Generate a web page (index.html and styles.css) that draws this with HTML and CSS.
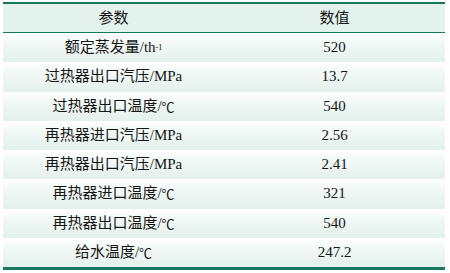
FILE: index.html
```html
<!DOCTYPE html>
<html lang="zh">
<head>
<meta charset="utf-8">
<link rel="stylesheet" href="styles.css">
</head>
<body>
<div class="tbl">
  <div class="row head"><div class="cell">参数</div><div class="cell">数值</div></div>
  <div class="body">
    <div class="row"><div class="cell">额定蒸发量/th<sup>-1</sup></div><div class="cell">520</div></div>
    <div class="row"><div class="cell">过热器出口汽压/MPa</div><div class="cell">13.7</div></div>
    <div class="row"><div class="cell">过热器出口温度/<span class="deg">℃</span></div><div class="cell">540</div></div>
    <div class="row"><div class="cell">再热器进口汽压/MPa</div><div class="cell">2.56</div></div>
    <div class="row"><div class="cell">再热器出口汽压/MPa</div><div class="cell">2.41</div></div>
    <div class="row"><div class="cell">再热器进口温度/<span class="deg">℃</span></div><div class="cell">321</div></div>
    <div class="row"><div class="cell">再热器出口温度/<span class="deg">℃</span></div><div class="cell">540</div></div>
    <div class="row"><div class="cell">给水温度/<span class="deg">℃</span></div><div class="cell">247.2</div></div>
  </div>
</div>
</body>
</html>
```
FILE: styles.css
```css
html, body {
  margin: 0;
  background: #ffffff;
}
body {
  padding: 2px 5px 0 3px;
  font-family: "Liberation Serif", "Noto Sans CJK SC", serif;
  font-size: 15px;
  color: #151515;
}
.tbl {
  width: 442px;
  border-top: 2px solid #17785c;
  border-bottom: 3px solid #17785c;
}
.row {
  display: grid;
  grid-template-columns: 1fr 1fr;
  height: 29.25px;
  background: linear-gradient(to bottom, #ffffff 0%, #f3f9f7 30%, #e3f0ec 100%);
}
.row.head {
  height: 28px;
  background: #e4f2ee;
  border-bottom: 1px solid #17785c;
}
.cell {
  display: flex;
  align-items: center;
  justify-content: center;
  line-height: 1;
  white-space: pre;
}
.deg {
  font-family: "Noto Sans CJK SC", sans-serif;
  font-size: 13px;
}
sup {
  font-size: 8px;
  line-height: 0;
  vertical-align: 7px;
}
```
